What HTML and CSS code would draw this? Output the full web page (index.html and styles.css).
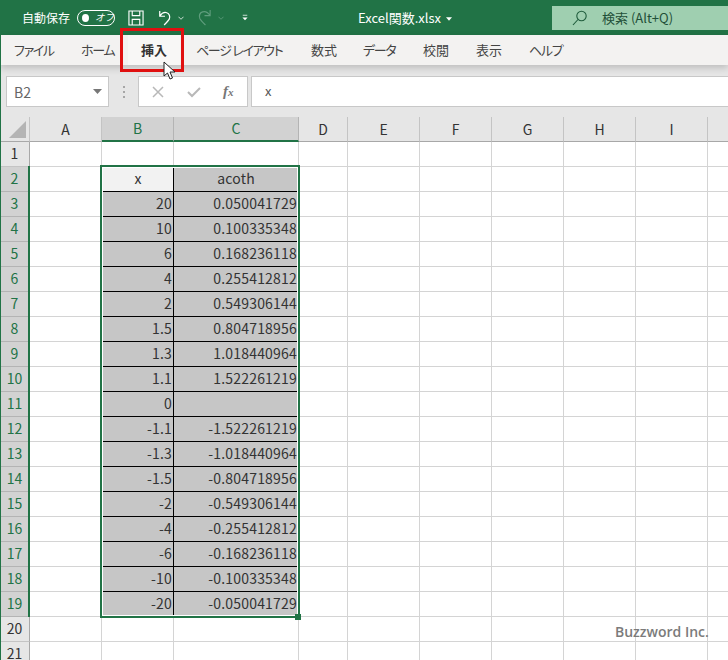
FILE: index.html
```html
<!DOCTYPE html>
<html lang="ja">
<head>
<meta charset="utf-8">
<title>Excel関数.xlsx</title>
<link rel="stylesheet" href="styles.css">
</head>
<body>
<div class="app">
  <header class="titlebar">
    <span class="autosave">自動保存</span>
    <span class="toggle"><span class="knob"></span><span class="off">オフ</span></span>
    <svg class="ico save" width="16" height="16" viewBox="0 0 17 17"><path d="M1 1h15v15H1zM4.500 1v5h8V1M4.500 16v-6h8v6" fill="none" stroke="#fff" stroke-width="1.200"/></svg>
    <svg class="ico undo" width="14" height="16" viewBox="0 0 16 18"><path d="M2 1v6h6M2 7c2-3 5-5 8-4 3 1 4 4 3 7-1 2-3 4-6 7" fill="none" stroke="#fff" stroke-width="1.400"/></svg>
    <svg class="caret" width="6" height="4" viewBox="0 0 7 4"><path d="M.5.5l3 3 3-3" fill="none" stroke="#e4eee8" stroke-width="1"/></svg>
    <svg class="ico redo" width="15" height="17" viewBox="0 0 16 18"><path d="M14 1v6H8M14 7c-2-3-5-5-8-4-3 1-4 4-3 7 1 2 3 4 6 7" fill="none" stroke="#5f9d7d" stroke-width="1.200"/></svg>
    <svg class="caret dim" width="6" height="4" viewBox="0 0 7 4"><path d="M.5.5l3 3 3-3" fill="none" stroke="#5f9d7d" stroke-width="1"/></svg>
    <svg class="ico more" width="6" height="7" viewBox="0 0 8 8"><path d="M1 1h6" stroke="#fff" stroke-width="1"/><path d="M.5 4h7L4 7.500z" fill="#fff"/></svg>
    <span class="filename">Excel関数.xlsx</span>
    <svg class="filecaret" width="6" height="4" viewBox="0 0 7 4"><path d="M0 0h7L3.500 4z" fill="#fff"/></svg>
    <div class="search">
      <svg width="16" height="16" viewBox="0 0 16 16"><circle cx="9.500" cy="6" r="4.700" fill="none" stroke="#1f5c3c" stroke-width="1.100"/><path d="M6 9.500L1 15" stroke="#1f5c3c" stroke-width="1.100"/></svg>
      <span>検索 (Alt+Q)</span>
    </div>
  </header>

  <nav class="tabs">
    <span class="tab kana t1">ファイル</span>
    <span class="tab kana t2">ホーム</span>
    <span class="tab t3 active">挿入</span>
    <span class="tab kana t4">ページ レイアウト</span>
    <span class="tab t5">数式</span>
    <span class="tab kana t6">データ</span>
    <span class="tab t7">校閲</span>
    <span class="tab t8">表示</span>
    <span class="tab kana t9">ヘルプ</span>
  </nav>

  <section class="formulabar">
    <div class="namebox"><span>B2</span><svg width="9" height="5" viewBox="0 0 9 5"><path d="M0 0h9L4.500 5z" fill="#777"/></svg></div>
    <svg class="grip" width="3" height="12" viewBox="0 0 3 12"><path d="M0 0h2v2H0zM0 5h2v2H0zM0 10h2v2H0z" fill="#a6a6a6"/></svg>
    <div class="fxbox">
      <svg width="12" height="12" viewBox="0 0 12 12"><path d="M1 1l10 10M11 1L1 11" stroke="#b8b8b8" stroke-width="1.500"/></svg>
      <svg width="14" height="12" viewBox="0 0 14 12"><path d="M1 6l4 4 8-8" fill="none" stroke="#b8b8b8" stroke-width="2"/></svg>
      <span class="fx">f<sub>x</sub></span>
    </div>
    <div class="input">x</div>
  </section>

  <div class="sheet">
    <table class="grid">
      <thead>
        <tr><th class="corner"><span class="tri"></span></th><th>A</th><th class="sel">B</th><th class="sel">C</th><th>D</th><th>E</th><th>F</th><th>G</th><th>H</th><th>I</th><th></th></tr>
      </thead>
      <tbody>
        <tr><th>1</th><td></td><td></td><td></td><td></td><td></td><td></td><td></td><td></td><td></td><td></td></tr>
        <tr><th class="sel">2</th><td></td><td class="d cur">x</td><td class="d mid">acoth</td><td></td><td></td><td></td><td></td><td></td><td></td><td></td></tr>
        <tr><th class="sel">3</th><td></td><td class="d">20</td><td class="d">0.050041729</td><td></td><td></td><td></td><td></td><td></td><td></td><td></td></tr>
        <tr><th class="sel">4</th><td></td><td class="d">10</td><td class="d">0.100335348</td><td></td><td></td><td></td><td></td><td></td><td></td><td></td></tr>
        <tr><th class="sel">5</th><td></td><td class="d">6</td><td class="d">0.168236118</td><td></td><td></td><td></td><td></td><td></td><td></td><td></td></tr>
        <tr><th class="sel">6</th><td></td><td class="d">4</td><td class="d">0.255412812</td><td></td><td></td><td></td><td></td><td></td><td></td><td></td></tr>
        <tr><th class="sel">7</th><td></td><td class="d">2</td><td class="d">0.549306144</td><td></td><td></td><td></td><td></td><td></td><td></td><td></td></tr>
        <tr><th class="sel">8</th><td></td><td class="d">1.5</td><td class="d">0.804718956</td><td></td><td></td><td></td><td></td><td></td><td></td><td></td></tr>
        <tr><th class="sel">9</th><td></td><td class="d">1.3</td><td class="d">1.018440964</td><td></td><td></td><td></td><td></td><td></td><td></td><td></td></tr>
        <tr><th class="sel">10</th><td></td><td class="d">1.1</td><td class="d">1.522261219</td><td></td><td></td><td></td><td></td><td></td><td></td><td></td></tr>
        <tr><th class="sel">11</th><td></td><td class="d">0</td><td class="d"></td><td></td><td></td><td></td><td></td><td></td><td></td><td></td></tr>
        <tr><th class="sel">12</th><td></td><td class="d">-1.1</td><td class="d">-1.522261219</td><td></td><td></td><td></td><td></td><td></td><td></td><td></td></tr>
        <tr><th class="sel">13</th><td></td><td class="d">-1.3</td><td class="d">-1.018440964</td><td></td><td></td><td></td><td></td><td></td><td></td><td></td></tr>
        <tr><th class="sel">14</th><td></td><td class="d">-1.5</td><td class="d">-0.804718956</td><td></td><td></td><td></td><td></td><td></td><td></td><td></td></tr>
        <tr><th class="sel">15</th><td></td><td class="d">-2</td><td class="d">-0.549306144</td><td></td><td></td><td></td><td></td><td></td><td></td><td></td></tr>
        <tr><th class="sel">16</th><td></td><td class="d">-4</td><td class="d">-0.255412812</td><td></td><td></td><td></td><td></td><td></td><td></td><td></td></tr>
        <tr><th class="sel">17</th><td></td><td class="d">-6</td><td class="d">-0.168236118</td><td></td><td></td><td></td><td></td><td></td><td></td><td></td></tr>
        <tr><th class="sel">18</th><td></td><td class="d">-10</td><td class="d">-0.100335348</td><td></td><td></td><td></td><td></td><td></td><td></td><td></td></tr>
        <tr><th class="sel">19</th><td></td><td class="d">-20</td><td class="d">-0.050041729</td><td></td><td></td><td></td><td></td><td></td><td></td><td></td></tr>
        <tr><th>20</th><td></td><td></td><td></td><td></td><td></td><td></td><td></td><td></td><td></td><td></td></tr>
        <tr><th>21</th><td></td><td></td><td></td><td></td><td></td><td></td><td></td><td></td><td></td><td></td></tr>
      </tbody>
    </table>
    <div class="selection"><span class="handle"></span></div>
    <div class="rowmark"></div>
    <div class="watermark">Buzzword Inc.</div>
  </div>

  <div class="edge"></div>
  <div class="highlight"></div>
  <svg class="pointer" width="13" height="20" viewBox="0 0 13 20"><path d="M1 1v14l3.500-3 2.500 6 2.500-1-2.500-6H12z" fill="#fff" stroke="#222" stroke-width="1"/></svg>
</div>
</body>
</html>
```

FILE: styles.css
```css
* { box-sizing: border-box; }
html, body { margin: 0; padding: 0; }
body {
  width: 728px;
  height: 660px;
  overflow: hidden;
  background: #fff;
  font-family: "Noto Sans CJK JP", "Noto Sans", sans-serif;
  color: #333;
}
.app { position: relative; width: 728px; height: 660px; overflow: hidden; }
.edge {
  position: absolute;
  left: 0;
  top: 35px;
  bottom: 0;
  width: 1px;
  background: #217346;
  z-index: 3;
}

/* title bar */
.titlebar {
  height: 35px;
  background: #217346;
  color: #fff;
  display: flex;
  align-items: center;
  padding-left: 22px;
  font-size: 12px;
}
.autosave { width: 49px; white-space: nowrap; }
.toggle {
  width: 38px;
  height: 16px;
  margin-left: 6px;
  border: 1px solid #fff;
  border-radius: 8px;
  display: flex;
  align-items: center;
  padding-left: 4px;
}
.knob { width: 8px; height: 8px; border-radius: 50%; background: #fff; }
.off { font-size: 9.500px; font-style: italic; margin-left: 6px; line-height: 1; white-space: nowrap; }
.save { margin-left: 13px; }
.undo { margin-left: 14px; }
.titlebar .caret { margin-left: 6px; margin-top: 1px; }
.redo { margin-left: 13px; }
.titlebar .caret.dim { margin-left: 6px; }
.more { margin-left: 18px; }
.filename { margin-left: 110px; white-space: nowrap; font-size: 13px; }
.filecaret { margin-left: 5px; margin-top: 2px; }
.search {
  margin-left: auto;
  width: 176px;
  height: 24px;
  background: #9fcfb0;
  color: #1f4f38;
  display: flex;
  align-items: center;
  padding-left: 20px;
  gap: 14px;
  font-size: 13px;
}

/* ribbon tabs */
.tabs {
  height: 30px;
  background: #f3f2f1;
  display: flex;
  align-items: center;
  font-size: 13px;
  font-feature-settings: "palt";
  color: #444;
  box-shadow: 0 3px 7px rgba(0, 0, 0, .18);
  position: relative;
  z-index: 2;
}
.tab { white-space: nowrap; height: 30px; line-height: 29px; }
.kana { letter-spacing: -1.300px; }
.t1 { margin-left: 14px; width: 67px; }
.t2 { width: 47px; }
.t3 { width: 52px; padding-left: 13px; }
.t4 { margin-left: 16px; width: 115px; }
.t5 { width: 52px; }
.t6 { width: 60px; }
.t7 { width: 53px; }
.t8 { width: 53px; }
.active { font-weight: 700; color: #333; background: #f8f7f6; }

/* formula bar */
.formulabar {
  height: 52px;
  background: #e6e6e6;
  display: flex;
  align-items: flex-start;
  padding: 11px 0 0 6px;
}
.namebox {
  width: 103px;
  height: 31px;
  background: #fff;
  border: 1px solid #c8c8c8;
  display: flex;
  align-items: center;
  justify-content: space-between;
  padding: 0 6px 0 7px;
  font-size: 14px;
  color: #666;
}
.grip { margin-left: 14px; margin-top: 10px; }
.fxbox {
  width: 110px;
  height: 31px;
  margin-left: 12px;
  background: #fff;
  border: 1px solid #c8c8c8;
  display: flex;
  align-items: center;
  padding-left: 13px;
  gap: 23px;
}
.fx {
  font-family: "Liberation Serif", serif;
  font-style: italic;
  font-weight: 700;
  font-size: 15px;
  color: #777;
  margin-left: -1px;
  white-space: nowrap;
}
.fx sub { font-size: 11px; vertical-align: baseline; }
.input {
  flex: 1;
  height: 31px;
  margin-left: 3px;
  background: #fff;
  border-top: 1px solid #c8c8c8;
  border-left: 1px solid #c8c8c8;
  border-bottom: 1px solid #c8c8c8;
  padding-left: 13px;
  font-size: 13px;
  line-height: 27px;
  color: #555;
}

/* sheet */
.sheet { position: relative; }
.grid {
  table-layout: fixed;
  border-collapse: separate;
  border-spacing: 0;
  width: 780px;
  font-size: 14px;
  color: #333;
}
.grid thead th:nth-child(1) { width: 30px; }
.grid thead th:nth-child(2) { width: 72px; }
.grid thead th:nth-child(3) { width: 72px; }
.grid thead th:nth-child(4) { width: 125px; }
.grid thead th:nth-child(5) { width: 49px; }
.grid thead th:nth-child(6) { width: 72px; }
.grid thead th:nth-child(7) { width: 72px; }
.grid thead th:nth-child(8) { width: 72px; }
.grid thead th:nth-child(9) { width: 72px; }
.grid thead th:nth-child(10) { width: 72px; }
.grid thead th:nth-child(11) { width: 72px; }
.grid th {
  font-weight: 400;
  background: #e6e6e6;
  padding: 0;
  text-align: center;
  overflow: hidden;
  white-space: nowrap;
}
.grid thead tr { height: 25px; }
.grid thead th {
  height: 25px;
  border-right: 1px solid #c4c4c4;
  border-bottom: 1px solid #a8a8a8;
  line-height: 23px;
  color: #333;
}
.grid tbody tr { height: 25px; }
.grid tbody th {
  height: 25px;
  padding-bottom: 2px;
  line-height: 20px;
  border-right: 1px solid #a8a8a8;
  border-bottom: 1px solid #c4c4c4;
}
.grid thead th.sel {
  background: #d2d2d2;
  color: #217346;
  border-bottom: 2px solid #217346;
  border-right-color: #b4b4b4;
}
.grid tbody th.sel {
  background: #d2d2d2;
  color: #217346;
  border-bottom-color: #b4b4b4;
}
.corner { position: relative; }
.tri {
  position: absolute;
  right: 3px;
  bottom: 3px;
  width: 0;
  height: 0;
  border-left: 17px solid transparent;
  border-bottom: 17px solid #b4b4b4;
}
.grid td {
  height: 25px;
  padding: 0 1px 2px 0;
  line-height: 20px;
  border-right: 1px solid #d4d4d4;
  border-bottom: 1px solid #d4d4d4;
  text-align: right;
  white-space: nowrap;
  overflow: hidden;
  letter-spacing: .2px;
}
.grid td.d {
  background: #c6c6c6;
  color: #333;
  border-right-color: #000;
  border-bottom-color: #000;
}
.grid td.d + td.d { border-right-color: #c6c6c6; }
.grid td.cur, .grid td.mid { text-align: center; padding-right: 0; }
.grid td.cur { background: #f2f2f2; padding-left: 1px; }
.grid tr:nth-child(19) td.d { border-bottom-color: #fff; }

.selection {
  position: absolute;
  left: 100px;
  top: 48px;
  width: 200px;
  height: 453px;
  border: 2px solid #217346;
  pointer-events: none;
}
.selection::before {
  content: "";
  position: absolute;
  inset: 0;
  border: 1px solid #fff;
}
.handle {
  position: absolute;
  right: -3px;
  bottom: -4px;
  width: 6px;
  height: 6px;
  background: #217346;
}
.rowmark {
  position: absolute;
  left: 28px;
  top: 49px;
  width: 2px;
  height: 451px;
  background: #217346;
}
.watermark {
  position: absolute;
  left: 615px;
  top: 505px;
  font-family: "Open Sans", sans-serif;
  font-size: 14px;
  font-weight: 600;
  color: #7b7b7b;
  white-space: nowrap;
}

/* annotation */
.highlight {
  position: absolute;
  left: 120px;
  top: 28px;
  width: 64px;
  height: 44px;
  border: 3px solid #e01010;
  z-index: 3;
}
.pointer {
  position: absolute;
  left: 163px;
  top: 61px;
  z-index: 4;
}
```
